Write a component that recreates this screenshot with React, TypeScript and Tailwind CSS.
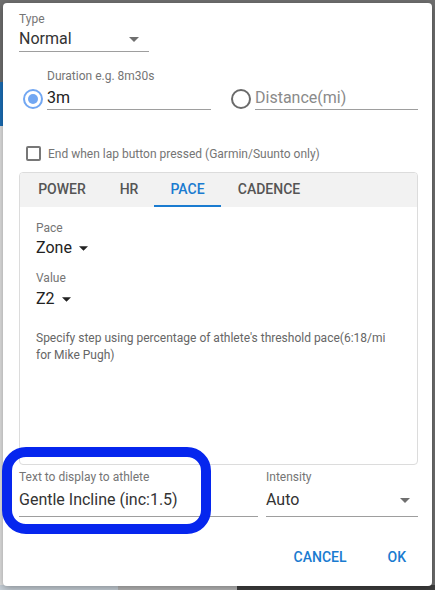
import React from "react";

const Caret = ({ className = "" }: { className?: string }) => (
  <svg width="10" height="5" viewBox="0 0 10 5" className={className}>
    <path d="M0 0h10L5 5z" fill="currentColor" />
  </svg>
);

export default function App() {
  const tabs = [
    { label: "POWER", w: "w-[84px]" },
    { label: "HR", w: "w-[50px]" },
    { label: "PACE", w: "w-[67px]", active: true },
    { label: "CADENCE", w: "w-[96px]" },
  ];

  return (
    <div
      className="relative w-[435px] h-[590px] overflow-hidden bg-[#707070]"
      style={{ fontFamily: "Roboto, 'Liberation Sans', sans-serif" }}>
      {/* page peeking out behind the dialog */}
      <div className="absolute left-0 top-[82px] w-[4px] h-[44px] bg-[#1b6fb8]" />
      <div className="absolute left-0 top-[126px] w-[4px] h-[464px] bg-[#e4e4e4]" />
      <div className="absolute left-0 bottom-0 w-[118px] h-[5px] bg-[#c9d2da]" />
      <div className="absolute left-[118px] bottom-0 w-[119px] h-[5px] bg-[#b9b9b9]" />
      <div className="absolute left-[237px] bottom-0 w-[198px] h-[5px] bg-[#3f3f3f]" />

      {/* Dialog */}
      <div className="absolute left-[3px] top-[3px] w-[429px] h-[583px] bg-white rounded-[4px] shadow-[0_2px_8px_rgba(0,0,0,0.35)] pl-[16px] pr-[14px] pt-[9px]">
        {/* Type */}
        <div className="text-[12px] leading-[14px] text-[#757575]">Type</div>
        <div className="mt-[3px] w-[130px] flex items-center justify-between border-b border-[#9e9e9e] pb-[2px] text-[16px] leading-[20px] text-[#333]">
          <span>Normal</span>
          <Caret className="text-[#6f6f6f] mr-[10px]" />
        </div>

        {/* Duration / Distance */}
        <div className="mt-[17px] flex items-end">
          <div className="ml-[4px] mb-[1px] w-[20px] h-[20px] rounded-full border-2 border-[#72a7f2] flex items-center justify-center">
            <div className="w-[10px] h-[10px] rounded-full bg-[#72a7f2]" />
          </div>
          <div className="ml-[4px] w-[164px]">
            <div className="text-[12px] leading-[14px] text-[#757575]">Duration e.g. 8m30s</div>
            <div className="mt-[5px] border-b border-[#9e9e9e] pb-[1px] text-[16px] leading-[20px] text-[#222]">3m</div>
          </div>
          <div className="ml-[20px] mb-[1px] w-[20px] h-[20px] rounded-full border-2 border-[#6a6a6a]" />
          <div className="ml-[4px] w-[163px] border-b border-[#9e9e9e] pb-[1px] text-[16px] leading-[20px] text-[#8a8a8a]">
            Distance(mi)
          </div>
        </div>

        {/* Lap checkbox */}
        <div className="mt-[36px] flex items-center">
          <div className="ml-[7px] w-[15px] h-[15px] rounded-[2px] border-2 border-[#777]" />
          <span className="ml-[7px] text-[12px] leading-[14px] text-[#757575]">
            End when lap button pressed (Garmin/Suunto only)
          </span>
        </div>

        {/* Tab panel */}
        <div className="mt-[11px] w-[399px] h-[293px] border border-[#dcdcdc] rounded-[4px] overflow-hidden flex flex-col">
          <div className="h-[34px] bg-[#f2f2f2] flex shrink-0">
            {tabs.map((t) => (
              <div
                key={t.label}
                className={`${t.w} flex items-center justify-center pt-[1px] text-[14px] font-medium border-b-2 ${
                  t.active ? "text-[#1a7bd0] border-[#1a7bd0]" : "text-[#555] border-transparent"
                }`}>
                {t.label}
              </div>
            ))}
          </div>
          <div className="pl-[16px] pr-[20px] pt-[14px]">
            <div className="text-[12px] leading-[14px] text-[#757575]">Pace</div>
            <div className="mt-[3px] flex items-center text-[16px] leading-[20px] text-[#222]">
              Zone <Caret className="ml-[7px] w-[9px] text-[#222]" />
            </div>
            <div className="mt-[13px] text-[12px] leading-[14px] text-[#757575]">Value</div>
            <div className="mt-[4px] flex items-center text-[16px] leading-[20px] text-[#222]">
              Z2 <Caret className="ml-[7px] w-[9px] text-[#222]" />
            </div>
            <div className="mt-[21px] text-[12px] leading-[17px] text-[#666]">
              Specify step using percentage of athlete's threshold pace(6:18/mi for Mike Pugh)
            </div>
          </div>
        </div>

        {/* Text / Intensity */}
        <div className="mt-[5px] flex">
          <div className="w-[239px]">
            <div className="text-[12px] leading-[14px] text-[#757575]">Text to display to athlete</div>
            <div className="mt-[6px] border-b border-[#9e9e9e] pb-[6px] text-[16px] leading-[20px] text-[#333]">
              Gentle Incline (inc:1.5)
            </div>
          </div>
          <div className="ml-[8px] w-[152px]">
            <div className="text-[12px] leading-[14px] text-[#757575]">Intensity</div>
            <div className="mt-[6px] flex items-center justify-between border-b border-[#9e9e9e] pb-[6px] text-[16px] leading-[20px] text-[#333]">
              <span>Auto</span>
              <Caret className="mr-[8px] text-[#6f6f6f]" />
            </div>
          </div>
        </div>

        {/* Actions */}
        <div className="mt-[30px] flex justify-end text-[14px] font-medium text-[#1a7bd0]">
          <span className="mr-[41px]">CANCEL</span>
          <span className="mr-[12px]">OK</span>
        </div>
      </div>

      {/* annotation highlight */}
      <div className="absolute left-[2px] top-[447px] w-[209px] h-[87px] rounded-[24px] border-[10px] border-[#0626ee]" />
    </div>
  );
}
